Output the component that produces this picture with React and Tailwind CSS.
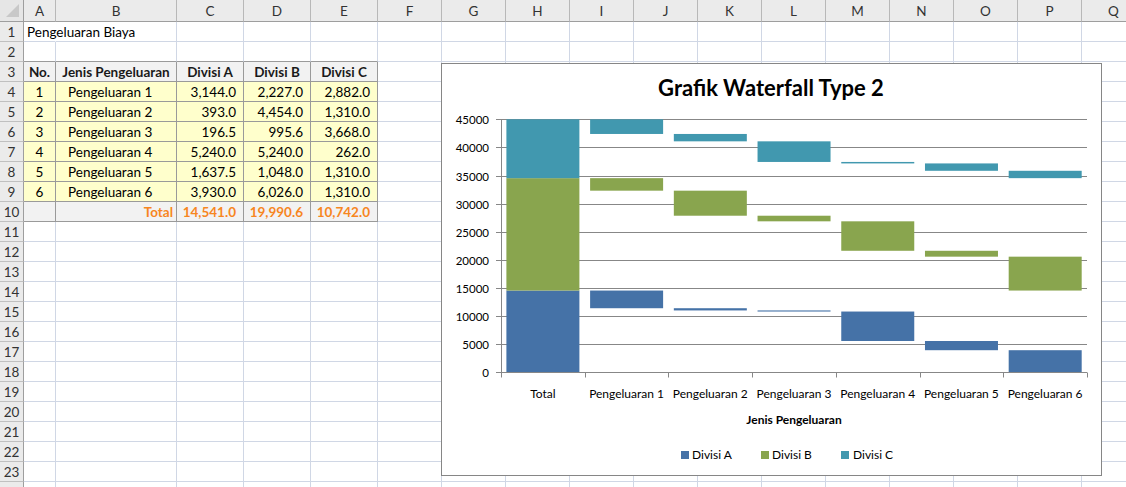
import React from "react";

const COLS = ["A","B","C","D","E","F","G","H","I","J","K","L","M","N","O","P","Q"];
const DATA = [
  ["1", "Pengeluaran 1", "3,144.0", "2,227.0", "2,882.0"],
  ["2", "Pengeluaran 2", "393.0", "4,454.0", "1,310.0"],
  ["3", "Pengeluaran 3", "196.5", "995.6", "3,668.0"],
  ["4", "Pengeluaran 4", "5,240.0", "5,240.0", "262.0"],
  ["5", "Pengeluaran 5", "1,637.5", "1,048.0", "1,310.0"],
  ["6", "Pengeluaran 6", "3,930.0", "6,026.0", "1,310.0"],
];
const HEAD = ["No.", "Jenis Pengeluaran", "Divisi A", "Divisi B", "Divisi C"];
const TOTAL = ["", "Total", "14,541.0", "19,990.6", "10,742.0"];

function Cell({ r, c }) {
  const inTable = r >= 3 && r <= 10 && c <= 4;
  let cls = "border-r border-b border-[#d0d7e5] bg-white";
  let content = null;
  if (inTable) {
    cls = "border-r border-b border-[#9a9a9a] pt-[3px]";
    if (r === 3) {
      cls += " bg-[#f2f2f2] font-bold text-[#1a1a1a] flex items-center justify-center";
      content = HEAD[c];
    } else if (r === 10) {
      cls += " bg-[#f2f2f2] font-bold text-[#f7861f] flex items-center justify-end";
      cls += c === 1 ? " pr-[3px]" : " pr-[7px]";
      content = TOTAL[c];
    } else {
      const row = DATA[r - 4];
      cls += " bg-[#ffffcc] text-black flex items-center";
      if (c === 0) cls += " justify-center";
      else if (c === 1) cls += " justify-start pl-[12px]";
      else cls += " justify-end pr-[7px]";
      content = row[c];
    }
  } else if (r === 2 && c <= 4) {
    cls = "border-r border-b border-r-[#d0d7e5] border-b-[#9a9a9a] bg-white";
  } else if (r === 1 && c === 0) {
    cls = "border-r border-b border-r-white border-b-[#d0d7e5] bg-white relative z-10 flex items-center pt-[3px] pl-[3px] whitespace-nowrap overflow-visible text-black";
    content = "Pengeluaran Biaya";
  }
  return <div className={cls}>{content}</div>;
}

function Corner() {
  return (
    <div className="border-r border-b border-[#9e9e9e] bg-[#e6e6e6] relative">
      <svg width="23" height="21" className="absolute left-0 top-0">
        <polygon points="19,4 19,17 6,17" fill="#c8c8c8" />
      </svg>
    </div>
  );
}

const BLUE = "#4572a7";
const GREEN = "#89a54e";
const TEAL = "#4198af";

function Chart() {
  const X0 = 59, X1 = 645, Y0 = 308.3, YT = 55.3;
  const k = (Y0 - YT) / 45000;
  const y = (v) => Y0 - Math.min(v, 45000) * k;
  const cw = (X1 - X0) / 7;
  const cats = ["Total", "Pengeluaran 1", "Pengeluaran 2", "Pengeluaran 3", "Pengeluaran 4", "Pengeluaran 5", "Pengeluaran 6"];
  const A = [3144, 393, 196.5, 5240, 1637.5, 3930];
  const B = [2227, 4454, 995.6, 5240, 1048, 6026];
  const C = [2882, 1310, 3668, 262, 1310, 1310];
  const tA = A.reduce((s, v) => s + v, 0);
  const tB = B.reduce((s, v) => s + v, 0);
  const tC = C.reduce((s, v) => s + v, 0);
  const bars = [];
  bars.push({ i: 0, lo: 0, hi: tA, color: BLUE });
  bars.push({ i: 0, lo: tA, hi: tA + tB, color: GREEN });
  bars.push({ i: 0, lo: tA + tB, hi: tA + tB + tC, color: TEAL });
  let a = tA, b = tA + tB, cc = tA + tB + tC;
  for (let j = 0; j < 6; j++) {
    bars.push({ i: j + 1, lo: a - A[j], hi: a, color: BLUE });
    bars.push({ i: j + 1, lo: b - B[j], hi: b, color: GREEN });
    bars.push({ i: j + 1, lo: cc - C[j], hi: cc, color: TEAL });
    a -= A[j]; b -= B[j]; cc -= C[j];
  }
  const grid = [];
  for (let v = 0; v <= 45000; v += 5000) grid.push(v);
  const gy = (v) => Math.round(y(v)) + 0.5;
  return (
    <div className="absolute left-[441px] top-[63px] w-[661px] h-[413px] border border-[#868686] bg-white z-20">
      <svg width="659" height="411" className="absolute left-0 top-0" style={{ fontFamily: "Lato, 'Liberation Sans', sans-serif" }}>
        <text x="329" y="32" textAnchor="middle" fontSize="22" fontWeight="700" fill="#000">Grafik Waterfall Type 2</text>
        {grid.map((v) => (
          <g key={v}>
            {v > 0 && <line x1={X0} x2={X1} y1={gy(v)} y2={gy(v)} stroke="#878787" strokeWidth="1" />}
            <line x1={X0 - 5} x2={X0} y1={gy(v)} y2={gy(v)} stroke="#878787" strokeWidth="1" />
            <text x="47" y={gy(v)} dy="4" textAnchor="end" fontSize="11.5" fill="#000">{v}</text>
          </g>
        ))}
        {bars.map((bb, n) => {
          const top = y(bb.hi);
          const bot = y(bb.lo);
          return (
            <rect key={n} x={X0 + bb.i * cw + 5.4} y={top} width="73" height={Math.max(bot - top, 0.8)} fill={bb.color} />
          );
        })}
        <line x1={X0 + 0.5} x2={X0 + 0.5} y1={gy(45000)} y2={gy(0)} stroke="#878787" strokeWidth="1" />
        <line x1={X0} x2={X1} y1={gy(0)} y2={gy(0)} stroke="#878787" strokeWidth="1" />
        {Array.from({ length: 8 }).map((_, i) => {
          const tx = Math.round(X0 + i * cw) + 0.5;
          return <line key={i} x1={tx} x2={tx} y1={gy(0)} y2={gy(0) + 5} stroke="#878787" strokeWidth="1" />;
        })}
        {cats.map((t, i) => (
          <text key={t} x={X0 + (i + 0.5) * cw} y="334" textAnchor="middle" fontSize="12" fill="#000">{t}</text>
        ))}
        <text x="352" y="360" textAnchor="middle" fontSize="12" fontWeight="700" fill="#000">Jenis Pengeluaran</text>
        <rect x="239" y="387" width="8" height="8" fill={BLUE} />
        <text x="250" y="395" fontSize="12" fill="#000">Divisi A</text>
        <rect x="319" y="387" width="8" height="8" fill={GREEN} />
        <text x="330" y="395" fontSize="12" fill="#000">Divisi B</text>
        <rect x="399" y="387" width="8" height="8" fill={TEAL} />
        <text x="411" y="395" fontSize="12" fill="#000">Divisi C</text>
      </svg>
    </div>
  );
}

export default function App() {
  const rows = Array.from({ length: 24 }, (_, i) => i + 1);
  return (
    <div
      className="relative w-[1126px] h-[487px] overflow-hidden bg-white text-[13.5px] leading-none"
      style={{ fontFamily: "Lato, 'Liberation Sans', sans-serif" }}
    >
      <div className="grid w-[1146px] grid-cols-[24px_32px_121px_67px_67px_67px_64px_64px_64px_64px_64px_64px_64px_64px_64px_64px_64px_64px] grid-rows-[22px_repeat(24,20px)]">
        <Corner />
        {COLS.map((l) => (
          <div key={l} className="border-r border-b border-r-[#b8b8b8] border-b-[#9e9e9e] bg-[#ebebeb] flex items-center justify-center pt-[3px] text-[#333]">
            {l}
          </div>
        ))}
        {rows.map((r) => (
          <React.Fragment key={r}>
            <div className="border-r border-b border-r-[#9e9e9e] border-b-[#c0c0c0] bg-[#ebebeb] flex items-center justify-center pt-[3px] text-[#333]">
              {r < 24 ? r : null}
            </div>
            {COLS.map((l, c) => (
              <Cell key={l} r={r} c={c} />
            ))}
          </React.Fragment>
        ))}
      </div>
      <Chart />
    </div>
  );
}
